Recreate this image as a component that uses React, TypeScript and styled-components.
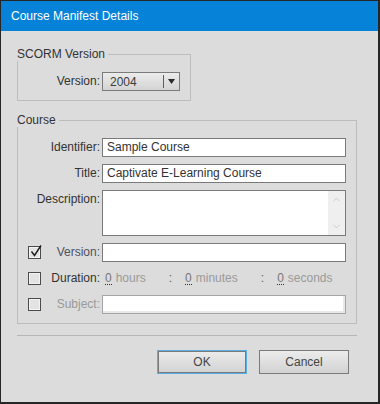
import styled, { createGlobalStyle } from "styled-components";
import { ChevronUp, ChevronDown } from "lucide-react";

const Global = createGlobalStyle`
  html, body {
    margin: 0;
    padding: 0;
    background: #262626;
  }
  body {
    font-family: "Liberation Sans", Arial, sans-serif;
    font-size: 12px;
  }
`;

const Window = styled.div`
  box-sizing: border-box;
  width: 377px;
  height: 401px;
  margin: 1px 0 0 1px;
  background: #dcdcdc;
  display: flex;
  flex-direction: column;
`;

const TitleBar = styled.div`
  height: 30px;
  line-height: 30px;
  padding-left: 10px;
  background: #0683d9;
  color: #fff;
  font-size: 12px;
`;

const Content = styled.div`
  padding: 16px 21px 0 16px;
  display: flex;
  flex-direction: column;
`;

const Group = styled.fieldset<{ $width: number; $top?: number }>`
  box-sizing: border-box;
  width: ${(p) => p.$width}px;
  margin: ${(p) => p.$top ?? 0}px 0 0 0;
  padding: 0;
  min-width: 0;
  border: 1px solid #bdbdbd;
`;

const Legend = styled.legend`
  padding: 0 3px 0 0;
  margin-left: -1px;
  line-height: 14px;
  font-size: 12px;
  color: #333;
`;

const GroupBody = styled.div`
  padding: 11px 9px 9px 10px;
`;

const VersionRow = styled.div`
  display: flex;
  align-items: center;
`;

const Label = styled.span<{ $tone?: string; $top?: boolean; $wide?: boolean }>`
  box-sizing: border-box;
  padding-right: 2px;
  text-align: right;
  line-height: 19px;
  color: ${(p) => p.$tone ?? "#333"};
  align-self: ${(p) => (p.$top ? "start" : "center")};
  grid-column: ${(p) => (p.$wide ? "1 / 3" : "auto")};
  white-space: nowrap;
`;

const FixedLabel = styled(Label)`
  width: 74px;
`;

const Select = styled.div`
  box-sizing: border-box;
  width: 78px;
  height: 19px;
  border: 1px solid #7b7b7b;
  background: linear-gradient(#ececec, #d3d3d3);
  display: flex;
  align-items: center;
  color: #3c3c3c;
`;

const SelectText = styled.span`
  flex: 1;
  padding-left: 7px;
`;

const SelectDivider = styled.span`
  width: 1px;
  height: 13px;
  background: #5e5e5e;
`;

const SelectArrow = styled.span`
  width: 15px;
  display: flex;
  justify-content: center;
  align-items: center;
`;

const Grid = styled.div`
  display: grid;
  grid-template-columns: 13px 61px 244px;
  row-gap: 7px;
  align-items: center;
`;

const Box = styled.span`
  box-sizing: border-box;
  width: 13px;
  height: 13px;
  border: 1px solid #4c4c4c;
  background: #e3e3e3;
  box-shadow: inset 0 0 0 1px #f3f3f3;
  position: relative;
  display: block;
`;

const Tick = styled.svg`
  position: absolute;
  left: 1px;
  top: -2px;
  overflow: visible;
`;

const Input = styled.div<{ $disabled?: boolean }>`
  box-sizing: border-box;
  height: 19px;
  border: 1px solid ${(p) => (p.$disabled ? "#a6a6a6" : "#7a7a7a")};
  background: #fff;
  box-shadow: ${(p) => (p.$disabled ? "inset -2px -2px 0 #e8e8e8" : "none")};
  padding-left: 4px;
  line-height: 17px;
  color: #333;
  white-space: nowrap;
  overflow: hidden;
`;

const TextArea = styled.div`
  box-sizing: border-box;
  height: 46px;
  border: 1px solid #7a7a7a;
  background: #fff;
  display: flex;
  justify-content: flex-end;
`;

const ScrollTrack = styled.div`
  width: 17px;
  background: #efefef;
  display: flex;
  flex-direction: column;
  justify-content: space-between;
  align-items: center;
  padding: 3px 0;
  color: #bdbdbd;
`;

const Duration = styled.div`
  display: flex;
  align-items: center;
  padding-left: 3px;
  line-height: 19px;
  white-space: nowrap;
`;

const Num = styled.span`
  color: #777;
  line-height: 12px;
  border-bottom: 1px dotted #333;
  margin-right: 4px;
`;

const Unit = styled.span`
  color: #9a9a9a;
  margin-right: 23px;
`;

const Colon = styled.span`
  color: #5d5d4a;
  margin-right: 13px;
`;

const Separator = styled.div`
  margin-top: 11px;
  height: 1px;
  background: #b6b6b6;
`;

const Buttons = styled.div`
  margin-top: 14px;
  display: flex;
  justify-content: flex-end;
  gap: 12px;
  padding-right: 8px;
`;

const Button = styled.button<{ $focus?: boolean }>`
  box-sizing: border-box;
  width: 90px;
  height: 24px;
  margin: 0;
  padding: 0;
  font-family: inherit;
  font-size: 12px;
  color: #444;
  background: linear-gradient(#ececec, #d2d2d2);
  border: 1px solid ${(p) => (p.$focus ? "#5aaee8" : "#7a7a7a")};
  box-shadow: ${(p) => (p.$focus ? "inset 0 0 0 1px #7a7a7a" : "none")};
`;

function Check({ checked }: { checked?: boolean }) {
  return (
    <Box>
      {checked && (
        <Tick width="12" height="12" viewBox="0 0 12 12">
          <path d="M1.5 6.5 L4.5 10.5 L11 0.5" fill="none" stroke="#1a1a1a" strokeWidth="1.4" />
        </Tick>
      )}
    </Box>
  );
}

export default function App() {
  return (
    <>
      <Global />
      <Window>
        <TitleBar>Course Manifest Details</TitleBar>
        <Content>
          <Group $width={174}>
            <Legend>SCORM Version</Legend>
            <GroupBody>
              <VersionRow>
                <FixedLabel>Version:</FixedLabel>
                <Select>
                  <SelectText>2004</SelectText>
                  <SelectDivider />
                  <SelectArrow>
                    <svg width="7" height="5" viewBox="0 0 7 5">
                      <path d="M0 0 H7 L3.5 5 Z" fill="#2a2a2a" />
                    </svg>
                  </SelectArrow>
                </Select>
              </VersionRow>
            </GroupBody>
          </Group>

          <Group $width={340} $top={12}>
            <Legend>Course</Legend>
            <GroupBody>
              <Grid>
                <Label $wide>Identifier:</Label>
                <Input>Sample Course</Input>

                <Label $wide>Title:</Label>
                <Input>Captivate E-Learning Course</Input>

                <Label $wide $top>Description:</Label>
                <TextArea>
                  <ScrollTrack>
                    <ChevronUp size={11} strokeWidth={1.6} />
                    <ChevronDown size={11} strokeWidth={1.6} />
                  </ScrollTrack>
                </TextArea>

                <Check checked />
                <Label $tone="#505060">Version:</Label>
                <Input />

                <Check />
                <Label>Duration:</Label>
                <Duration>
                  <Num>0</Num>
                  <Unit>hours</Unit>
                  <Colon>:</Colon>
                  <Num>0</Num>
                  <Unit>minutes</Unit>
                  <Colon>:</Colon>
                  <Num>0</Num>
                  <Unit>seconds</Unit>
                </Duration>

                <Check />
                <Label $tone="#9a9a9a">Subject:</Label>
                <Input $disabled />
              </Grid>
            </GroupBody>
          </Group>

          <Separator />
          <Buttons>
            <Button $focus>OK</Button>
            <Button>Cancel</Button>
          </Buttons>
        </Content>
      </Window>
    </>
  );
}
